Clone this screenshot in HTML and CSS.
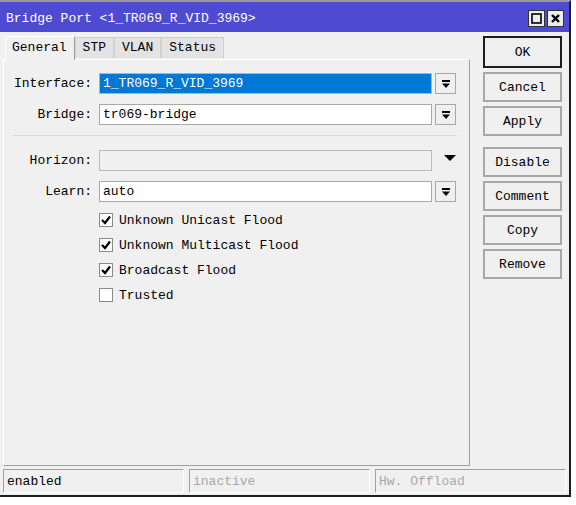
FILE: index.html
```html
<!DOCTYPE html>
<html>
<head>
<meta charset="utf-8">
<link rel="stylesheet" href="styles.css">
</head>
<body>
<div class="window">
  <div class="titlebar">
    <span class="title">Bridge Port &lt;1_TR069_R_VID_3969&gt;</span>
    <div class="tbtns">
      <span class="tbtn"><svg width="11" height="11" viewBox="0 0 11 11"><rect x="1" y="1" width="9" height="9" fill="none" stroke="#000" stroke-width="1.6"/></svg></span>
      <span class="tbtn"><svg width="11" height="11" viewBox="0 0 11 11"><path d="M2 2 L9 9 M9 2 L2 9" stroke="#000" stroke-width="2.4"/></svg></span>
    </div>
  </div>
  <div class="main">
    <div class="left">
      <div class="tabs">
        <span class="tab active">General</span>
        <span class="tab">STP</span>
        <span class="tab">VLAN</span>
        <span class="tab">Status</span>
      </div>
      <div class="panel">
        <div class="row">
          <label class="lbl">Interface:</label>
          <div class="field selected">1_TR069_R_VID_3969</div>
          <span class="dd"><svg width="10" height="10" viewBox="0 0 10 10"><rect x="1" y="1" width="8" height="2" fill="#000"/><path d="M1 4.5 H9 L5 9 Z" fill="#000"/></svg></span>
        </div>
        <div class="row">
          <label class="lbl">Bridge:</label>
          <div class="field">tr069-bridge</div>
          <span class="dd"><svg width="10" height="10" viewBox="0 0 10 10"><rect x="1" y="1" width="8" height="2" fill="#000"/><path d="M1 4.5 H9 L5 9 Z" fill="#000"/></svg></span>
        </div>
        <div class="sep"></div>
        <div class="row">
          <label class="lbl">Horizon:</label>
          <div class="field disabled"></div>
          <span class="arrow"><svg width="12" height="8" viewBox="0 0 12 8"><path d="M0 1 H12 L6 7 Z" fill="#000"/></svg></span>
        </div>
        <div class="row">
          <label class="lbl">Learn:</label>
          <div class="field">auto</div>
          <span class="dd"><svg width="10" height="10" viewBox="0 0 10 10"><rect x="1" y="1" width="8" height="2" fill="#000"/><path d="M1 4.5 H9 L5 9 Z" fill="#000"/></svg></span>
        </div>
        <div class="checks">
          <div class="chk"><span class="box"><svg width="12" height="12" viewBox="0 0 12 12"><path d="M2 6 L5 9 L10 2.5" fill="none" stroke="#000" stroke-width="2.2"/></svg></span>Unknown Unicast Flood</div>
          <div class="chk"><span class="box"><svg width="12" height="12" viewBox="0 0 12 12"><path d="M2 6 L5 9 L10 2.5" fill="none" stroke="#000" stroke-width="2.2"/></svg></span>Unknown Multicast Flood</div>
          <div class="chk"><span class="box"><svg width="12" height="12" viewBox="0 0 12 12"><path d="M2 6 L5 9 L10 2.5" fill="none" stroke="#000" stroke-width="2.2"/></svg></span>Broadcast Flood</div>
          <div class="chk"><span class="box"></span>Trusted</div>
        </div>
      </div>
    </div>
    <div class="buttons">
      <button class="btn default">OK</button>
      <button class="btn">Cancel</button>
      <button class="btn">Apply</button>
      <button class="btn gap">Disable</button>
      <button class="btn">Comment</button>
      <button class="btn">Copy</button>
      <button class="btn">Remove</button>
    </div>
  </div>
  <div class="status">
    <span class="cell">enabled</span>
    <span class="cell dim">inactive</span>
    <span class="cell dim">Hw. Offload</span>
  </div>
</div>
</body>
</html>
```

FILE: styles.css
```css
html, body {
  margin: 0;
  padding: 0;
  background: #ffffff;
}
body {
  font-family: "Liberation Mono", "DejaVu Sans Mono", monospace;
  font-size: 13px;
  color: #000;
}
.window {
  width: 569px;
  height: 493px;
  background: #f0f0f0;
  border-top: 2px solid #9a9a9a;
  border-right: 2px solid #1e1e1e;
  border-bottom: 2px solid #1e1e1e;
  display: flex;
  flex-direction: column;
}
.titlebar {
  height: 30px;
  background: #4f4bd1;
  display: flex;
  align-items: center;
  justify-content: space-between;
  padding-left: 6px;
  padding-right: 5px;
  flex: none;
}
.title {
  color: #fff;
  line-height: 14px;
  margin-top: 3px;
}
.tbtns {
  display: flex;
  gap: 2px;
  margin-top: 3px;
}
.tbtn {
  width: 15px;
  height: 15px;
  background: #ececec;
  border: 1px solid #333;
  display: flex;
  align-items: center;
  justify-content: center;
}
.main {
  display: flex;
  padding: 3px 0 0 3px;
  height: 434px;
  flex: none;
}
.left {
  width: 467px;
  display: flex;
  flex-direction: column;
}
.tabs {
  display: flex;
  align-items: flex-end;
  height: 24px;
  padding-left: 2px;
  position: relative;
  z-index: 1;
}
.tab {
  height: 20px;
  line-height: 20px;
  padding: 0 7px;
  background: #e3e3e3;
  border: 1px solid #d0d0d0;
  border-bottom: none;
  margin-bottom: 1px;
}
.tab.active {
  height: 23px;
  line-height: 21px;
  background: #f0f0f0;
  border: 1px solid #ffffff;
  border-right: 1px solid #a0a0a0;
  border-bottom: none;
  margin-bottom: -1px;
  padding: 0 7px 0 6px;
}
.panel {
  height: 407px;
  border-top: 1px solid #ffffff;
  border-left: 1px solid #ffffff;
  border-right: 1px solid #a0a0a0;
  border-bottom: 1px solid #a0a0a0;
  padding-top: 13px;
  box-sizing: border-box;
}
.row {
  display: flex;
  align-items: center;
  height: 21px;
  margin-bottom: 10px;
}
.lbl {
  width: 88px;
  text-align: right;
  margin-right: 7px;
}
.field {
  width: 333px;
  height: 21px;
  box-sizing: border-box;
  border: 1px solid #a8a8a8;
  background: #fff;
  padding-left: 3px;
  line-height: 19px;
}
.field.selected {
  background: #0078d7;
  color: #fff;
  border-color: #9ab8d8;
}
.field.disabled {
  background: #f0f0f0;
  border-color: #b8b8b8;
}
.dd {
  width: 21px;
  height: 21px;
  box-sizing: border-box;
  margin-left: 3px;
  border: 1px solid #a8a8a8;
  background: #f0f0f0;
  display: flex;
  align-items: center;
  justify-content: center;
}
.arrow {
  width: 21px;
  height: 21px;
  margin-left: 7px;
  display: flex;
  align-items: center;
  justify-content: center;
  margin-top: -6px;
}
.sep {
  height: 1px;
  background: #dcdcdc;
  margin: 4px 12px 14px 9px;
}
.checks {
  padding-left: 95px;
  display: flex;
  flex-direction: column;
  gap: 9px;
  margin-top: 0;
}
.chk {
  display: flex;
  align-items: center;
  height: 16px;
  gap: 6px;
}
.box {
  width: 14px;
  height: 14px;
  box-sizing: border-box;
  border: 1px solid #8a8a8a;
  background: #fff;
  display: flex;
  align-items: center;
  justify-content: center;
}
.buttons {
  display: flex;
  flex-direction: column;
  margin-left: 13px;
  padding-top: 2px;
  gap: 4px;
}
.btn {
  width: 79px;
  height: 30px;
  font-family: "Liberation Mono", "DejaVu Sans Mono", monospace;
  font-size: 13px;
  background: #f0f0f0;
  border: 2px solid #a8a8a8;
  color: #000;
  padding: 0;
}
.btn.default {
  height: 32px;
  border: 2px solid #1e1e1e;
  margin-top: -1px;
}
.btn.gap {
  margin-top: 7px;
}
.status {
  display: flex;
  gap: 5px;
  padding-left: 3px;
  height: 26px;
  align-items: flex-start;
}
.cell {
  width: 181px;
  height: 24px;
  box-sizing: border-box;
  border-top: 1px solid #a0a0a0;
  border-left: 1px solid #a0a0a0;
  border-right: 1px solid #ffffff;
  border-bottom: 1px solid #ffffff;
  padding-left: 3px;
  line-height: 24px;
  font-size: 13px;
}
.cell:last-child {
  width: 191px;
}
.cell.dim {
  color: #a8a8a8;
}
```
